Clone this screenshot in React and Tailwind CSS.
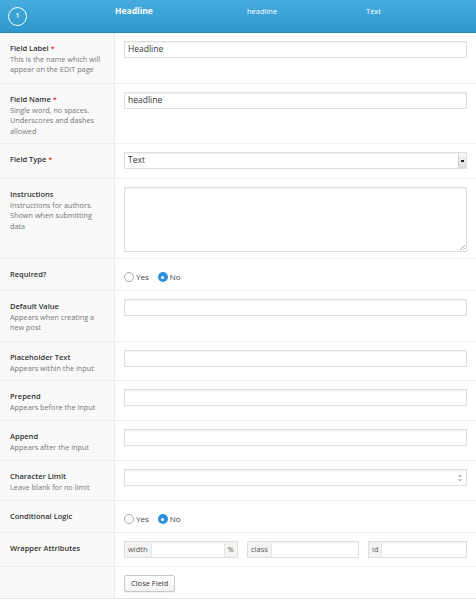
const rows = [
  { title: 'Field Label', req: true, desc: ['This is the name which will', 'appear on the EDIT page'], h: 'h-[50px]', kind: 'text', value: 'Headline' },
  { title: 'Field Name', req: true, desc: ['Single word, no spaces.', 'Underscores and dashes', 'allowed'], h: 'h-[60px]', kind: 'text', value: 'headline' },
  { title: 'Field Type', req: true, desc: [], h: 'h-[35px]', kind: 'select', value: 'Text' },
  { title: 'Instructions', desc: ['Instructions for authors.', 'Shown when submitting', 'data'], h: 'h-[80px]', kind: 'textarea' },
  { title: 'Required?', desc: [], h: 'h-[32px]', kind: 'radio' },
  { title: 'Default Value', desc: ['Appears when creating a', 'new post'], h: 'h-[51px]', kind: 'text', value: '' },
  { title: 'Placeholder Text', desc: ['Appears within the input'], h: 'h-[39px]', kind: 'text', value: '' },
  { title: 'Prepend', desc: ['Appears before the input'], h: 'h-[40px]', kind: 'text', value: '' },
  { title: 'Append', desc: ['Appears after the input'], h: 'h-[40px]', kind: 'text', value: '' },
  { title: 'Character Limit', desc: ['Leave blank for no limit'], h: 'h-[40px]', kind: 'number' },
  { title: 'Conditional Logic', desc: [], h: 'h-[32px]', kind: 'radio' },
  { title: 'Wrapper Attributes', desc: [], h: 'h-[34px]', kind: 'wrapper' },
  { title: '', desc: [], h: 'h-[32px]', kind: 'button' },
]

const box = 'h-[17px] border border-[#dfdfdf] bg-white shadow-[inset_0_1px_2px_rgba(0,0,0,0.07)]'

const Radio = ({ checked, label }) => (
  <label className="flex items-center gap-[2px] text-[8px] text-[#444]">
    {checked ? (
      <span className="flex h-[10px] w-[10px] items-center justify-center rounded-full bg-[#2f8fdb]">
        <span className="h-[3px] w-[3px] rounded-full bg-white"></span>
      </span>
    ) : (
      <span className="h-[10px] w-[10px] rounded-full border border-[#aaa] bg-white"></span>
    )}
    <span>{label}</span>
  </label>
)

const Addon = ({ children }) => (
  <span className="flex h-full items-center bg-[#f4f4f4] px-[3px] text-[7.5px] text-[#555]">{children}</span>
)

const Control = ({ row }) => {
  if (row.kind === 'text')
    return <div className={`${box} flex items-center px-[3px] text-[8.5px] text-[#333]`}>{row.value}</div>
  if (row.kind === 'select')
    return (
      <div className={`${box} flex items-center justify-between pl-[3px] text-[8.5px] text-[#333]`}>
        <span>{row.value}</span>
        <span className="flex h-full w-[8px] items-center justify-center border-l border-[#ccc] bg-gradient-to-b from-[#fafafa] to-[#ddd]">
          <span className="h-[2px] w-[3px] bg-[#222]"></span>
        </span>
      </div>
    )
  if (row.kind === 'textarea')
    return (
      <div className="relative h-[65px] border border-[#dfdfdf] bg-white shadow-[inset_0_1px_2px_rgba(0,0,0,0.07)]">
        <svg className="absolute bottom-[1px] right-[1px]" width="6" height="6" viewBox="0 0 6 6">
          <path d="M6 1 1 6M6 4 4 6" stroke="#999" strokeWidth="0.8" />
        </svg>
      </div>
    )
  if (row.kind === 'number')
    return (
      <div className={`${box} flex items-center justify-end pr-[4px]`}>
        <svg width="4" height="8" viewBox="0 0 4 8">
          <path d="M0.5 3 2 1.2 3.5 3M0.5 5 2 6.8 3.5 5" stroke="#777" strokeWidth="0.8" fill="none" />
        </svg>
      </div>
    )
  if (row.kind === 'radio')
    return (
      <div className="flex items-center gap-[9px] pt-[4px]">
        <Radio label="Yes" />
        <Radio checked label="No" />
      </div>
    )
  if (row.kind === 'wrapper')
    return (
      <div className="flex items-center">
        <div className={`${box} flex w-[114px] items-stretch`}>
          <Addon>width</Addon>
          <span className="flex-1 border-x border-[#e6e6e6]"></span>
          <Addon>%</Addon>
        </div>
        <div className={`${box} ml-[9px] flex w-[112px] items-stretch`}>
          <Addon>class</Addon>
          <span className="flex-1 border-l border-[#e6e6e6]"></span>
        </div>
        <div className={`${box} ml-[9px] flex flex-1 items-stretch`}>
          <Addon>id</Addon>
          <span className="flex-1 border-l border-[#e6e6e6]"></span>
        </div>
      </div>
    )
  return (
    <button className="block h-[17px] rounded-[2px] border border-[#c8c8c8] bg-gradient-to-b from-white to-[#f3f3f3] px-[6px] text-[7.5px] text-[#333] shadow-[0_1px_0_rgba(0,0,0,0.06)]">
      Close Field
    </button>
  )
}

export default function App() {
  return (
    <div className="h-[600px] w-[476px] bg-white font-['Open_Sans',sans-serif]">
      <div className="flex h-[33px] border-b border-[#2585b9] bg-gradient-to-b from-[#46acdd] to-[#2e98cc] text-white">
        <div className="flex w-[115px] items-center pl-[8px]">
          <span className="flex h-[19px] w-[19px] items-center justify-center rounded-full border-[1.5px] border-white text-[7px] font-semibold">1</span>
        </div>
        <div className="w-[132px] pt-[5px] text-[8.5px] font-bold">Headline</div>
        <div className="w-[119px] pt-[6px] text-[7.5px]">headline</div>
        <div className="pt-[6px] text-[7.5px]">Text</div>
      </div>
      <div className="border-b border-[#e4e4e4]">
        {rows.map((row, i) => (
          <div key={i} className={`flex ${row.h} ${i > 0 ? 'border-t border-[#efefef]' : ''}`}>
            <div className="w-[115px] shrink-0 border-r border-[#e8e8e8] bg-[#f9f9f9] px-[10px] pt-[10px] leading-[10.5px]">
              {row.title && (
                <div className="text-[7.5px] font-semibold text-[#333]">
                  {row.title}
                  {row.req && <span className="text-[#dd3d36]"> *</span>}
                </div>
              )}
              {row.desc.map((d) => (
                <div key={d} className="text-[7.3px] text-[#777]">{d}</div>
              ))}
            </div>
            <div className="flex-1 pl-[9px] pr-[9px] pt-[8px]">
              <Control row={row} />
            </div>
          </div>
        ))}
      </div>
    </div>
  )
}
